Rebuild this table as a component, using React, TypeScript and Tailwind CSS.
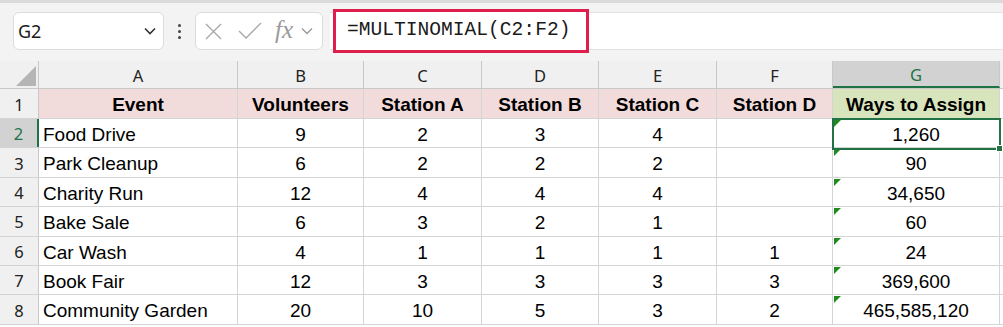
import React from "react";

const cols = ["A", "B", "C", "D", "E", "F", "G"];
const widths = ["w-[199px]", "w-[126px]", "w-[118px]", "w-[117px]", "w-[118px]", "w-[116px]", "w-[167px]"];

const header = ["Event", "Volunteers", "Station A", "Station B", "Station C", "Station D", "Ways to Assign"];
const data: string[][] = [
  ["Food Drive", "9", "2", "3", "4", "", "1,260"],
  ["Park Cleanup", "6", "2", "2", "2", "", "90"],
  ["Charity Run", "12", "4", "4", "4", "", "34,650"],
  ["Bake Sale", "6", "3", "2", "1", "", "60"],
  ["Car Wash", "4", "1", "1", "1", "1", "24"],
  ["Book Fair", "12", "3", "3", "3", "3", "369,600"],
  ["Community Garden", "20", "10", "5", "3", "2", "465,585,120"],
];

const cellFont = { fontFamily: '"Liberation Sans", Arial, sans-serif' };
const uiFont = { fontFamily: '"Noto Sans", sans-serif' };

export default function App() {
  return (
    <div className="w-[1003px] h-[327px] overflow-hidden bg-white relative" style={cellFont}>
      {/* top formula bar area */}
      <div className="h-[61px] bg-[#f3f3f3] border-t-[3px] border-[#dadada] flex items-start relative">
        <div className="mt-[9px] ml-[13px] w-[151px] h-[38px] bg-white border border-[#dcdcdc] rounded-[6px] flex items-center justify-between pl-[4px] pr-[6px]">
          <span className="text-[18px] text-[#1a1a1a]" style={uiFont}>G2</span>
          <svg width="14" height="10" viewBox="0 0 14 10"><path d="M2 2.5 L7 7.5 L12 2.5" fill="none" stroke="#333" strokeWidth="1.6" /></svg>
        </div>
        <div className="mt-[9px] w-[31px] h-[38px] flex flex-col items-center justify-center gap-[3px]">
          <div className="w-[3px] h-[3px] bg-[#444] rounded-full" />
          <div className="w-[3px] h-[3px] bg-[#444] rounded-full" />
          <div className="w-[3px] h-[3px] bg-[#444] rounded-full" />
        </div>
        <div className="mt-[9px] w-[128px] h-[38px] bg-white border border-[#dcdcdc] rounded-[6px] flex items-center pl-[9px]">
          <svg width="17" height="17" viewBox="0 0 17 17"><path d="M1 1 L16 16 M16 1 L1 16" stroke="#a8a8a8" strokeWidth="1.4" fill="none" /></svg>
          <svg width="24" height="18" viewBox="0 0 24 18" className="ml-[16px]"><path d="M1 9 L8 16 L23 1" stroke="#a8a8a8" strokeWidth="1.4" fill="none" /></svg>
          <span className="ml-[13px] text-[25px] italic text-[#9a9a9a] leading-none -mt-[3px]" style={{ fontFamily: '"Liberation Serif", serif' }}>fx</span>
          <svg width="14" height="10" viewBox="0 0 14 10" className="ml-[7px]"><path d="M2 2.5 L7 7.5 L12 2.5" fill="none" stroke="#9a9a9a" strokeWidth="1.4" /></svg>
        </div>
        <div className="absolute left-[330px] right-0 top-[9px] h-[38px] bg-white border-y border-[#e2e2e2]" />
        <div className="absolute left-[333px] top-[6px] w-[256px] h-[44px] border-[3px] border-[#de1f4e] flex items-center pl-[11px] bg-white">
          <span className="text-[19.6px] text-[#1a1a1a]" style={{ fontFamily: '"Liberation Mono", monospace' }}>=MULTINOMIAL(C2:F2)</span>
        </div>
      </div>

      {/* column headers */}
      <div className="flex h-[28px] bg-[#f0f0f0] border-b border-[#c8c8c8]">
        <div className="w-[39px] border-r border-[#c8c8c8] relative">
          <svg width="20" height="20" viewBox="0 0 20 20" className="absolute left-[16px] top-[5px]"><path d="M20 0 L20 20 L0 20 Z" fill="#b5b5b5" /></svg>
        </div>
        {cols.map((c, i) => (
          <div
            key={c}
            className={`${widths[i]} flex items-center justify-center pt-[3px] text-[16.5px] border-r border-[#c8c8c8] ${i === 6 ? "bg-[#d2d2d2] text-[#217346] border-b-2 border-b-[#217346]" : "text-[#222]"}`}
            style={uiFont}
          >
            {c}
          </div>
        ))}
      </div>

      {/* row 1 */}
      <div className="flex h-[30px] border-b border-[#d4d4d4]">
        <div className="w-[39px] bg-[#f0f0f0] border-r border-[#c8c8c8] flex items-center justify-center pt-[3px] text-[16.5px] text-[#222]" style={uiFont}>1</div>
        {header.map((h, i) => (
          <div
            key={h}
            className={`${widths[i]} flex items-center justify-center pt-[4px] text-[19px] font-bold text-black border-r border-[#d4d4d4] ${i === 6 ? "bg-[#d8e4bc]" : "bg-[#f2dcdb]"}`}
          >
            {h}
          </div>
        ))}
      </div>

      {data.map((row, r) => (
        <div key={r} className="flex h-[29.4px] border-b border-[#d4d4d4]">
          <div
            className={`w-[39px] flex items-center justify-center pt-[3px] text-[16.5px] ${r === 0 ? "bg-[#d2d2d2] text-[#217346] border-r-2 border-[#217346]" : "bg-[#f0f0f0] text-[#222] border-r border-[#c8c8c8]"}`}
            style={uiFont}
          >
            {r + 2}
          </div>
          {row.map((v, i) => (
            <div
              key={i}
              className={`${widths[i]} relative flex items-center text-[19px] text-black border-r border-[#d4d4d4] pt-[4px] ${i === 0 ? "justify-start pl-[4px]" : "justify-center"}`}
            >
              {i === 6 && (
                <svg width="7" height="7" viewBox="0 0 7 7" className="absolute left-[1px] top-[1px]"><path d="M0 0 L7 0 L0 7 Z" fill="#1f8a1f" /></svg>
              )}
              {v}
            </div>
          ))}
        </div>
      ))}

      {/* selected cell G2 */}
      <div className="absolute left-[832px] top-[118px] w-[169px] h-[32px] border-2 border-[#217346] pointer-events-none" />
      <div className="absolute left-[996px] top-[145px] w-[7px] h-[7px] bg-[#217346] border border-white" />
    </div>
  );
}
